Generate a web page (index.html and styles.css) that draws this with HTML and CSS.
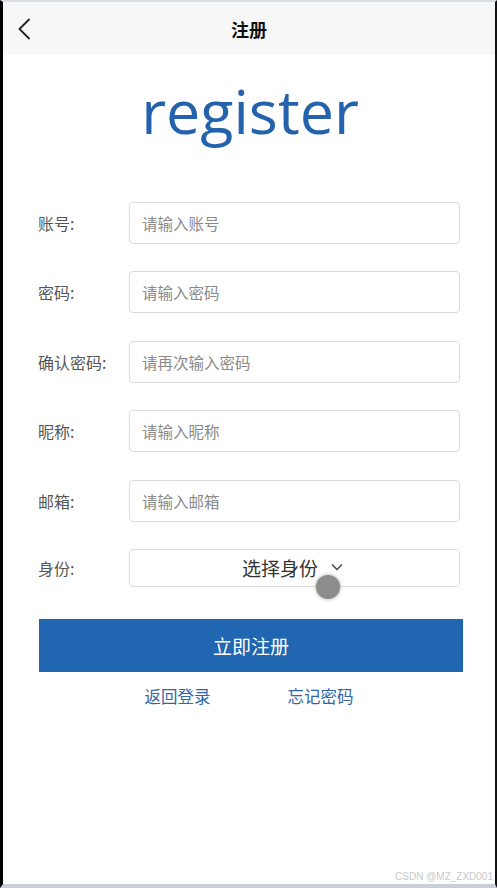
FILE: index.html
```html
<!DOCTYPE html>
<html lang="zh">
<head>
<meta charset="utf-8">
<title>注册</title>
<link rel="stylesheet" href="styles.css">
</head>
<body>
<div class="frame">
  <header class="topbar">
    <span class="back">
      <svg width="14" height="22" viewBox="0 0 14 22"><path d="M12 1.5 L2.5 11 L12 20.5" fill="none" stroke="#222" stroke-width="1.8" stroke-linecap="round" stroke-linejoin="round"/></svg>
    </span>
    <h1 class="title">注册</h1>
  </header>
  <div class="brand">register</div>
  <form class="form">
    <label class="lbl">账号:</label>
    <div class="field"><span class="ph">请输入账号</span></div>
    <label class="lbl">密码:</label>
    <div class="field"><span class="ph">请输入密码</span></div>
    <label class="lbl">确认密码:</label>
    <div class="field"><span class="ph">请再次输入密码</span></div>
    <label class="lbl">昵称:</label>
    <div class="field"><span class="ph">请输入昵称</span></div>
    <label class="lbl">邮箱:</label>
    <div class="field"><span class="ph">请输入邮箱</span></div>
    <label class="lbl">身份:</label>
    <div class="field select">
      <span class="sel-text">选择身份</span>
      <svg class="chev" width="12" height="8" viewBox="0 0 12 8"><path d="M1 1.5 L6 6.5 L11 1.5" fill="none" stroke="#444" stroke-width="1.4"/></svg>
      <span class="cursor"></span>
    </div>
  </form>
  <div class="submit">立即注册</div>
  <div class="links">
    <a class="link">返回登录</a>
    <a class="link">忘记密码</a>
  </div>
  <div class="spacer"></div>
  <div class="watermark">CSDN @MZ_ZXD001</div>
</div>
</body>
</html>
```
FILE: styles.css
```css
* { box-sizing: border-box; }
html, body { margin: 0; padding: 0; background: #fff; }
body { font-family: "Noto Sans CJK SC", "Noto Sans", sans-serif; }
.frame {
  width: 497px;
  height: 888px;
  border-left: 3px solid #000;
  border-right: 2px solid #111;
  border-top: 2px solid #d9dde8;
  border-bottom: 4px solid #c9ced8;
  display: flex;
  flex-direction: column;
  background: #fff;
}
.topbar {
  height: 53px;
  background: #f7f7f7;
  display: flex;
  align-items: center;
  justify-content: center;
  position: relative;
}
.back {
  position: absolute;
  left: 14px;
  top: 16px;
  display: flex;
}
.title {
  margin: 0;
  font-size: 18px;
  font-weight: 700;
  color: #111;
}
.brand {
  text-align: center;
  font-family: "Open Sans", sans-serif;
  font-size: 61px;
  color: #2462ad;
  line-height: 1;
  margin-top: 25px;
  padding-left: 2px;
  height: 122px;
}
.form {
  display: grid;
  grid-template-columns: 91px 331px;
  row-gap: 27.4px;
  padding-left: 35px;
  align-items: center;
}
.lbl {
  font-size: 16px;
  color: #555;
}
.field {
  height: 42px;
  border: 1px solid #dcdcdc;
  border-radius: 4px;
  display: flex;
  align-items: center;
  padding-left: 12px;
}
.ph {
  font-size: 15.5px;
  color: #8a8a8a;
}
.select {
  height: 38px;
  justify-content: center;
  padding-left: 0;
  gap: 13px;
  padding-right: 4px;
  position: relative;
}
.sel-text {
  font-size: 19px;
  color: #333;
}
.chev { margin-top: -2px; }
.cursor {
  position: absolute;
  left: 186px;
  top: 25px;
  width: 24px;
  height: 24px;
  border-radius: 50%;
  background: #8c8c8c;
  box-shadow: 0 0 3px 1px rgba(120,120,120,0.4);
}
.submit {
  margin: 32px 32px 0 36px;
  height: 53px;
  background: #2066b0;
  color: #fff;
  font-size: 19px;
  display: flex;
  align-items: center;
  justify-content: center;
}
.links {
  display: flex;
  justify-content: center;
  gap: 77px;
  margin-top: 12px;
}
.link {
  font-size: 16.5px;
  color: #3465a4;
}
.spacer { flex: 1; }
.watermark {
  text-align: right;
  font-family: "Liberation Sans", sans-serif;
  font-size: 10px;
  color: #c8c8c8;
  padding-right: 2px;
  padding-bottom: 2px;
}
```
